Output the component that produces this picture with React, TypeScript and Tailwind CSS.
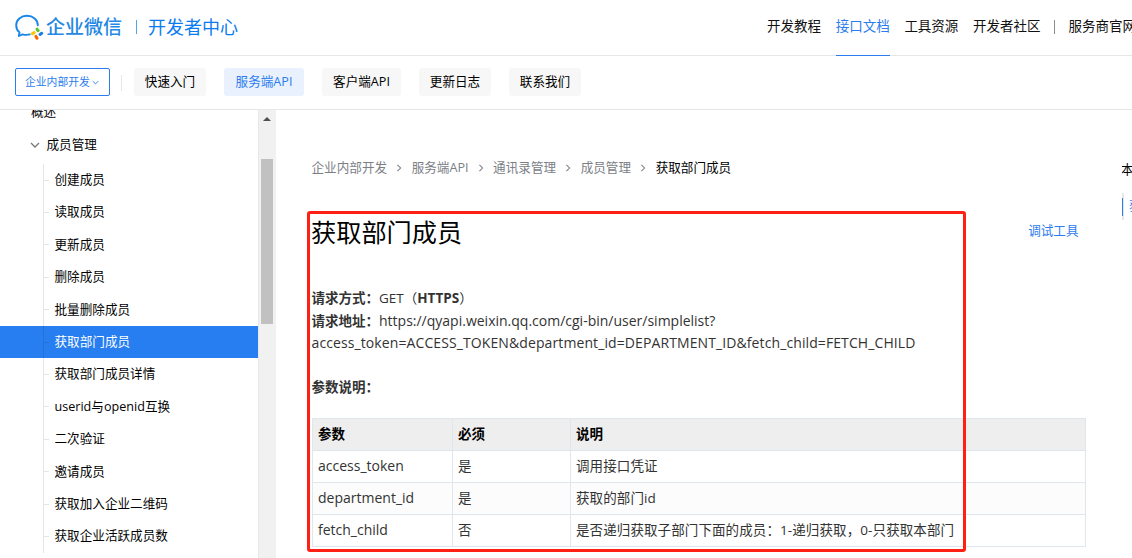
import React from "react";

const topNav = [
  { title: "开发教程" },
  { title: "接口文档", active: true },
  { title: "工具资源" },
  { title: "开发者社区" },
];

const tabs = [
  { title: "快速入门", width: "w-[72px]" },
  { title: "服务端API", width: "w-20", active: true },
  { title: "客户端API", width: "w-[79px]" },
  { title: "更新日志", width: "w-[72px]" },
  { title: "联系我们", width: "w-[72px]" },
];

const menu = [
  "创建成员",
  "读取成员",
  "更新成员",
  "删除成员",
  "批量删除成员",
  "获取部门成员",
  "获取部门成员详情",
  "userid与openid互换",
  "二次验证",
  "邀请成员",
  "获取加入企业二维码",
  "获取企业活跃成员数",
];

const crumbs = ["企业内部开发", "服务端API", "通讯录管理", "成员管理"];

const params = [
  { name: "access_token", required: "是", description: "调用接口凭证" },
  { name: "department_id", required: "是", description: "获取的部门id" },
  {
    name: "fetch_child",
    required: "否",
    description: "是否递归获取子部门下面的成员：1-递归获取，0-只获取本部门",
  },
];

function Logo() {
  return (
    <svg width="30" height="26" viewBox="0 0 30 26" fill="none">
      <path
        d="M22.8 11.2C22.8 5.8 18 1.8 12 1.8S1.2 5.8 1.2 11.2c0 3 1.2 5.4 3.3 7.200L3.800 22l3.800-1.700c2.400.7 4.800.7 7.200.1"
        stroke="#1a86e8"
        strokeWidth="1.9"
        strokeLinecap="round"
        strokeLinejoin="round"
      />
      <g strokeWidth="3" strokeLinecap="round">
        <path d="M22 15.200l1.200 1.500" stroke="#5cc52a" />
        <path d="M26.700 19.300l-1.700 1.200" stroke="#1a7fe0" />
        <path d="M22 24.200l-1-1.800" stroke="#fb6500" />
        <path d="M17.400 19.700l1.800-1.200" stroke="#ffc400" />
      </g>
    </svg>
  );
}

function Chevron(props: { className: string; d: string }) {
  return (
    <svg
      viewBox="0 0 10 10"
      fill="none"
      stroke="currentColor"
      strokeWidth="1.3"
      className={props.className}
    >
      <path d={props.d} />
    </svg>
  );
}

function Header() {
  return (
    <header className="flex h-14 shrink-0 items-center justify-between border-b border-[#e7e7e9]">
      <div className="-mt-0.5 flex items-center pl-[15px]">
        <Logo />
        <span className="ml-px text-[19px] leading-6 font-medium text-[#2488e4]">企业微信</span>
        <span className="ml-[14px] h-[14px] w-px bg-[#4ea6ef]" />
        <span className="ml-[11px] text-[18px] leading-6 text-[#0a7cf0]">开发者中心</span>
      </div>
      <nav className="flex h-14 w-[365px] items-stretch gap-[14.7px] overflow-hidden text-[13.5px] leading-[52px] whitespace-nowrap text-[#111]">
        {topNav.map((item) => (
          <a
            key={item.title}
            className={item.active ? "border-b border-[#2b7cee] text-[#2b7cee]" : ""}
          >
            {item.title}
          </a>
        ))}
        <span className="mt-5 -mr-px -ml-[1.5px] h-[14px] w-px shrink-0 bg-[#8a8c90]" />
        <a>服务商官网</a>
      </nav>
    </header>
  );
}

function TabBar() {
  return (
    <div className="flex h-[54px] shrink-0 items-center border-b border-[#e7e7e9] pl-[15px] text-[12.6px]">
      <button className="mb-0.5 flex h-7 w-[95px] items-center rounded-xs border border-[#2b7cee] pt-px pl-[9px] text-[10.8px] text-[#2b7cee]">
        企业内部开发
        <Chevron className="ml-0.5 size-[7px]" d="M1 3l4 4 4-4" />
      </button>
      <span className="ml-[11px] h-4 w-px bg-[#e7e7e9]" />
      <div className="mb-0.5 ml-3 flex gap-[18px]">
        {tabs.map((tab) => (
          <a
            key={tab.title}
            className={`flex h-7 items-center justify-center rounded-[3px] pt-px ${tab.width} ${
              tab.active ? "bg-[#e9f1fe] text-[#2b7cee]" : "bg-[#f7f7f7] text-black"
            }`}
          >
            {tab.title}
          </a>
        ))}
      </div>
    </div>
  );
}

function Sidebar() {
  return (
    <aside className="flex w-[276px] shrink-0 text-[12.6px] text-black">
      <div className="w-[258px] overflow-hidden">
        <p className="-mt-2 pl-[31px] leading-5">概述</p>
        <div className="mt-[13px] flex h-5 items-center">
          <Chevron className="ml-[30px] size-[10px] text-[#777]" d="M1 3l4 4 4-4" />
          <span className="ml-[6.5px]">成员管理</span>
        </div>
        <ul className="mt-[9px]">
          {menu.map((title) => {
            const selected = title === "获取部门成员";
            return (
              <li
                key={title}
                className={`flex h-[32.4px] items-center pl-[43px] ${
                  selected ? "bg-[#267ef0] text-white" : ""
                }`}
              >
                <span
                  className={`h-full w-px ${selected ? "bg-[#2372d8]" : "bg-[#e5e5e7]"}`}
                />
                <span
                  className={`mr-[5.500px] h-px w-[5px] ${selected ? "bg-[#2372d8]" : "bg-[#e5e5e7]"}`}
                />
                <span className="pt-[0.5px]">{title}</span>
              </li>
            );
          })}
        </ul>
      </div>
      <div className="w-[18px] border-l border-[#e7e7e9] bg-[#f1f1f1] px-0.5">
        <div className="mt-[7px] ml-0.5 h-0 w-0 border-x-4 border-b-4 border-x-transparent border-b-[#505050]" />
        <div className="mt-[38px] mr-px h-[165px] bg-[#c1c1c1]" />
      </div>
    </aside>
  );
}

function ParamTable() {
  return (
    <table className="mt-[19px] w-[774px] table-fixed border-collapse text-left leading-[22px] [&_td]:h-8 [&_td]:border [&_td]:border-[#dfe6ee] [&_td]:px-[5px] [&_td]:py-0 [&_th]:h-8 [&_th]:border [&_th]:border-[#dfe6ee] [&_th]:px-[5px] [&_th]:py-0">
      <colgroup>
        <col className="w-[140px]" />
        <col className="w-[118px]" />
        <col />
      </colgroup>
      <thead>
        <tr className="bg-[#eeeeee] text-black">
          <th>参数</th>
          <th>必须</th>
          <th>说明</th>
        </tr>
      </thead>
      <tbody>
        {params.map((param) => (
          <tr key={param.name} className="even:bg-[#fcfcfc]">
            <td className="text-sm leading-[22px]">{param.name}</td>
            <td>{param.required}</td>
            <td className="tracking-[0.1px] whitespace-nowrap">{param.description}</td>
          </tr>
        ))}
      </tbody>
    </table>
  );
}

function Article() {
  return (
    <main className="relative ml-9 w-[774px] shrink-0 text-[13.5px] text-[#333]">
      <div className="mt-12 -ml-[0.5px] flex h-5 items-center text-[12.6px] text-[#7b7e85]">
        {crumbs.map((crumb) => (
          <React.Fragment key={crumb}>
            <span>{crumb}</span>
            <Chevron className="mx-[8.3px] size-2" d="M3 1l4 4-4 4" />
          </React.Fragment>
        ))}
        <span className="text-black">获取部门成员</span>
      </div>
      <div className="mt-9 -ml-px flex h-9 items-center justify-between">
        <h1 className="text-[25.2px] leading-9 text-black">获取部门成员</h1>
        <a className="mr-[7.5px] mb-0.5 text-[12.6px] text-[#2b7cee]">调试工具</a>
      </div>
      <div className="mt-[37px] -ml-[0.5px] leading-[22.7px]">
        <p>
          <b>请求方式：</b>GET（<b>HTTPS</b>）
        </p>
        <p>
          <b>请求地址：</b>
          <span className="text-sm leading-none">
            https://qyapi.weixin.qq.com/cgi-bin/user/simplelist?
          </span>
        </p>
        <p className="text-sm leading-[22.7px] tracking-[0.1px]">
          access_token=ACCESS_TOKEN&amp;department_id=DEPARTMENT_ID&amp;fetch_child=FETCH_CHILD
        </p>
        <p className="mt-[21px]">
          <b>参数说明：</b>
        </p>
      </div>
      <ParamTable />
      {/* highlight frame drawn over the request description */}
      <div className="absolute top-[101px] -left-[5px] h-[341px] w-[659px] rounded-[3px] border-3 border-[#ff2015]" />
    </main>
  );
}

function Outline() {
  return (
    <aside className="ml-9 w-[10px] shrink-0 overflow-hidden text-[12.6px] whitespace-nowrap">
      <p className="mt-[50px] -ml-px leading-5 text-black">本页目录</p>
      <div className="mt-[13px] flex h-[27px] items-center border-l-2 border-[#e7e7e9]">
        <span className="-ml-0.5 h-[18px] w-px shrink-0 bg-[#2b7cee]" />
        <span className="ml-1.5 text-[#2b7cee]">获取部门成员</span>
      </div>
    </aside>
  );
}

export default function App() {
  return (
    <div className="flex h-[558px] w-[1132px] flex-col overflow-hidden bg-white font-['Open_Sans','Noto_Sans_CJK_SC',sans-serif]">
      <Header />
      <TabBar />
      <div className="flex min-h-0 flex-1 overflow-hidden">
        <Sidebar />
        <Article />
        <Outline />
      </div>
    </div>
  );
}
